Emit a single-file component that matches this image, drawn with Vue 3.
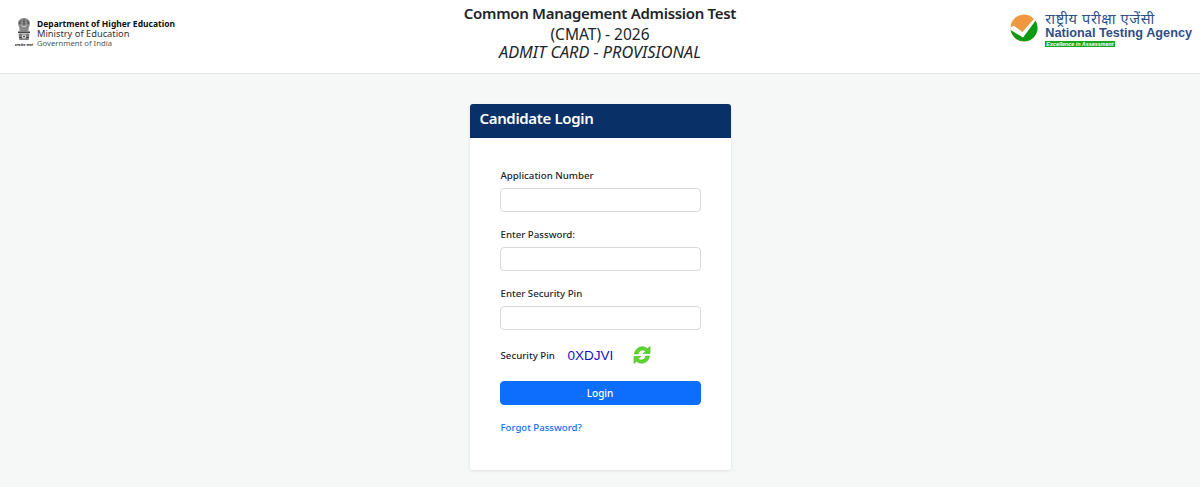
<script setup>
const fields = [
  { label: 'Application Number' },
  { label: 'Enter Password:' },
  { label: 'Enter Security Pin' }
]
</script>

<template>
  <div class="page">
    <header class="top">
      <div class="dept">
        <svg class="emblem" viewBox="0 0 18 30" width="18" height="30">
          <path d="M3 6.500C3 3.500 5.500 1 9 1s6 2.500 6 5.500c0 1.500-.8 2.800-1.300 4L13.500 14.500h-9L4.300 10.500C3.800 9.300 3 8 3 6.500Z" fill="#8a8a8a" />
          <path d="M6 3.500c-1 .8-1.500 2-1 3.500M12 3.500c1 .8 1.500 2 1 3.500M9 2.500V8" stroke="#3f3f3f" stroke-width="1" fill="none" />
          <path d="M6.500 8.500c1.500 1.500 3.500 1.500 5 0" stroke="#d0d0d0" stroke-width="1" fill="none" />
          <rect x="3" y="14.500" width="12" height="1.500" fill="#444" />
          <path d="M3.500 16.500h11l-.8 6.500H4.300Z" fill="#7d7d7d" />
          <circle cx="9" cy="19.500" r="2.200" fill="#dcdcdc" />
          <circle cx="9" cy="19.500" r="1" fill="#4a4a4a" />
          <path d="M4.500 20.500h2.200M11.300 20.500h2.200" stroke="#333" stroke-width="1" />
          <text x="9" y="28.500" text-anchor="middle" class="motto">सत्यमेव जयते</text>
        </svg>
        <div class="dept-text">
          <div class="d1">Department of Higher Education</div>
          <div class="d2">Ministry of Education</div>
          <div class="d3">Government of India</div>
        </div>
      </div>

      <div class="title">
        <div class="t1">Common Management Admission Test</div>
        <div class="t2">(CMAT) - 2026</div>
        <div class="t3">ADMIT CARD - PROVISIONAL</div>
      </div>

      <div class="nta">
        <svg class="nta-mark" viewBox="0 0 28 28" width="28" height="28">
          <circle cx="14" cy="14" r="13.500" fill="#f0983f" />
          <path d="M.6 15.500 13 23.200 25.200 6.200A13.500 13.500 0 0 1 27.500 14 13.500 13.500 0 0 1 .6 15.500Z" fill="#0f9a16" />
          <path d="M.5 13.500 3.800 11.800 12.500 18 24 4.800 25.600 6.600 13 23.500 .7 16Z" fill="#fff" />
        </svg>
        <div class="nta-text">
          <div class="hi">राष्ट्रीय परीक्षा एजेंसी</div>
          <div class="en">National Testing Agency</div>
          <div class="tag">Excellence in Assessment</div>
        </div>
      </div>
    </header>

    <main class="main">
      <section class="card">
        <h1 class="card-head">Candidate Login</h1>
        <form class="card-body" @submit.prevent>
          <div v-for="f in fields" :key="f.label" class="field">
            <label class="lbl">{{ f.label }}</label>
            <input class="inp" type="text" />
          </div>
          <div class="pin-row">
            <span class="lbl pin-lbl">Security Pin</span>
            <span class="pin">0XDJVI</span>
            <svg class="refresh" viewBox="0 0 20 20" width="20" height="20">
              <path d="M2.500 9C3 4.500 6.500 1.800 10.500 1.800c2 0 3.800.8 5 2L18 1.500V8.500H11.200L13.800 6.200C13 5.400 11.800 5 10.500 5 8.500 5 6.800 6.500 6.300 9Z" fill="#5fd62e" stroke="#45b51f" stroke-width=".6" />
              <path d="M17.500 11c-.5 4.500-4 7.200-8 7.200-2 0-3.800-.8-5-2L2 18.500V11.500H8.800L6.200 13.800C7 14.600 8.200 15 9.500 15c2 0 3.700-1.500 4.200-4Z" fill="#5fd62e" stroke="#45b51f" stroke-width=".6" />
            </svg>
          </div>
          <button class="btn" type="submit">Login</button>
          <a class="forgot" href="#">Forgot Password?</a>
        </form>
      </section>
    </main>
  </div>
</template>

<style>
html, body { margin: 0; background: #f6f8f8; }
</style>

<style scoped>
.page {
  height: 487px;
  overflow: hidden;
  font-family: "Noto Sans", "Open Sans", sans-serif;
  color: #212529;
  background: #f6f8f8;
}
.top {
  height: 73px;
  background: #fff;
  border-bottom: 1px solid #e4e6e6;
  display: flex;
  justify-content: space-between;
  align-items: flex-start;
  position: relative;
}
.dept {
  display: flex;
  align-items: flex-start;
  gap: 4px;
  margin: 17px 0 0 15px;
}
.motto { font-size: 3.800px; font-weight: 700; fill: #333; font-family: "Noto Sans", sans-serif; }
.dept-text { padding-top: 1px; }
.d1 { font-size: 8.500px; font-weight: 700; color: #111; line-height: 11px; }
.d2 { font-size: 9.300px; color: #333; line-height: 10px; }
.d3 { font-size: 7.700px; color: #555; line-height: 9px; }
.title {
  text-align: center;
  position: absolute;
  top: 3px;
  left: 0;
  right: 0;
}
.t1 { font-size: 15px; font-weight: 600; letter-spacing: -.3px; line-height: 21px; color: #212529; }
.t2 { font-size: 15.500px; line-height: 19px; margin-top: 1px; }
.t3 { font-size: 16.300px; font-style: italic; line-height: 17px; }
.nta {
  display: flex;
  align-items: flex-start;
  gap: 7px;
  margin: 12px 8px 0 0;
}
.nta-mark { margin-top: 2px; }
.hi { font-size: 14.600px; line-height: 13px; color: #30508a; font-family: "Noto Sans", "Noto Sans Devanagari", "Lohit Devanagari", sans-serif; letter-spacing: .6px; white-space: nowrap; }
.en { font-family: "Liberation Sans", sans-serif; font-weight: 700; font-size: 12.700px; line-height: 14px; margin-top: 1px; color: #2e4f87; white-space: nowrap; }
.tag {
  display: inline-block;
  font-family: "Liberation Sans", sans-serif;
  font-size: 5.400px;
  font-weight: 700;
  font-style: italic;
  line-height: 6px;
  color: #fff;
  background: #17a81c;
  padding: 0 1px;
  vertical-align: top;
  margin-top: 1px;
}
.main {
  display: flex;
  justify-content: center;
  padding-top: 30px;
}
.card {
  width: 261px;
  background: #fff;
  border-radius: 3px;
  box-shadow: 0 1px 3px rgba(0, 0, 0, .1);
}
.card-head {
  margin: 0;
  height: 34px;
  padding: 0 10px;
  background: #0a3167;
  border-radius: 3px 3px 0 0;
  color: #fff;
  font-size: 15px;
  font-weight: 600;
  letter-spacing: -.35px;
  line-height: 29px;
}
.card-body {
  padding: 30px 30px 0;
  height: 332px;
  box-sizing: border-box;
  display: flex;
  flex-direction: column;
}
.field { display: flex; flex-direction: column; margin-bottom: 15px; }
.lbl { font-size: 9.700px; font-weight: 500; line-height: 15px; color: #212529; margin-bottom: 5px; padding-left: 1px; }
.inp {
  height: 24px;
  box-sizing: border-box;
  width: 201px;
  border: 1px solid #d5dadf;
  border-radius: 4px;
  background: #fff;
  padding: 0 8px;
}
.pin-row { display: flex; align-items: center; height: 20px; }
.pin-lbl { margin: 0; width: 67px; }
.pin { font-family: "Liberation Sans", sans-serif; font-size: 13.500px; color: #1512c0; width: 64px; }
.btn {
  margin-top: 16px;
  width: 201px;
  height: 24px;
  border: 1px solid #0d6efd;
  border-radius: 4px;
  background: #0d6efd;
  color: #fff;
  font-family: inherit;
  font-size: 10px;
  font-weight: 500;
  padding: 0;
}
.forgot {
  margin-top: 15px;
  padding-left: 1px;
  font-size: 9.600px;
  font-weight: 500;
  line-height: 15px;
  color: #0d6efd;
  text-decoration: none;
}
</style>
